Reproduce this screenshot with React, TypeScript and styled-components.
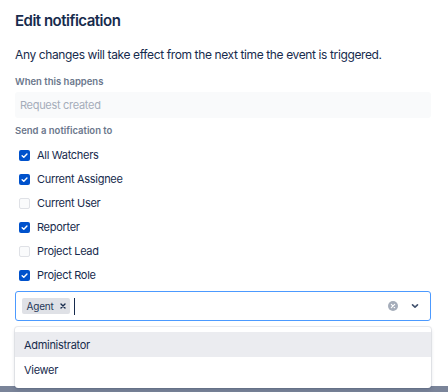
import styled, { createGlobalStyle } from "styled-components";

const GlobalStyle = createGlobalStyle`
  html, body {
    margin: 0;
    padding: 0;
    background: #7a8499;
  }
  body {
    font-family: Inter, "Noto Sans", sans-serif;
    color: #172b4d;
  }
`;

const Page = styled.div`
  width: 448px;
  height: 392px;
  position: relative;
  overflow: hidden;
`;

const Modal = styled.div`
  background: #ffffff;
  height: 386px;
  padding: 11px 17px 0 15px;
  box-sizing: border-box;
  display: flex;
  flex-direction: column;
`;

const Title = styled.h1`
  margin: 0;
  font-size: 15px;
  font-weight: 600;
  line-height: 20px;
  letter-spacing: -0.5px;
  color: #172b4d;
`;

const Description = styled.p`
  margin: 16px 0 0;
  font-size: 12px;
  line-height: 16px;
  letter-spacing: -0.38px;
  white-space: nowrap;
`;

const Label = styled.div<{ $gap: number }>`
  margin-top: ${(p) => p.$gap}px;
  font-size: 9.5px;
  font-weight: 600;
  line-height: 16px;
  color: #6b778c;
`;

const DisabledField = styled.div`
  margin-top: 2px;
  height: 26px;
  display: flex;
  align-items: center;
  padding: 0 5px;
  background: #f9fafb;
  border-radius: 3px;
  font-size: 11px;
  letter-spacing: -0.3px;
  color: #a5adba;
`;

const CheckList = styled.div`
  display: flex;
  flex-direction: column;
  margin-top: 4px;
`;

const CheckRow = styled.label`
  display: flex;
  align-items: center;
  gap: 7px;
  height: 24px;
  padding-left: 4px;
  font-size: 11px;
  letter-spacing: -0.3px;
`;

const Box = styled.span<{ $checked: boolean }>`
  width: 11px;
  height: 11px;
  box-sizing: border-box;
  border-radius: 2px;
  display: flex;
  align-items: center;
  justify-content: center;
  background: ${(p) => (p.$checked ? "#0052cc" : "#fafbfc")};
  border: ${(p) => (p.$checked ? "none" : "1px solid #dfe1e6")};
`;

const Select = styled.div`
  margin-top: 4px;
  height: 30px;
  box-sizing: border-box;
  border: 1.5px solid #4c9aff;
  border-radius: 3px;
  display: flex;
  align-items: center;
  padding: 0 6px 0 5.5px;
  gap: 4px;
`;

const Tag = styled.span`
  display: flex;
  align-items: center;
  gap: 6px;
  height: 16px;
  padding: 0 4px 0 5px;
  background: #dfe1e6;
  border-radius: 2px;
  font-size: 10px;
  letter-spacing: -0.2px;
  color: #253858;
`;

const Cursor = styled.span`
  width: 1px;
  height: 17px;
  background: #172b4d;
`;

const Spacer = styled.div`
  flex: 1;
`;

const IconSlot = styled.span`
  width: 18px;
  display: flex;
  justify-content: center;
`;

const Menu = styled.div`
  position: absolute;
  left: 15px;
  top: 327px;
  width: 416px;
  height: 61px;
  background: #ffffff;
  border-radius: 3px;
  box-shadow: 0 0 0 1px rgba(9, 30, 66, 0.08), 0 2px 4px rgba(9, 30, 66, 0.14);
  padding-top: 5px;
  box-sizing: border-box;
`;

const Option = styled.div<{ $active?: boolean }>`
  height: 25px;
  display: flex;
  align-items: center;
  padding-left: 9px;
  font-size: 11px;
  letter-spacing: -0.3px;
  background: ${(p) => (p.$active ? "#ebecf0" : "transparent")};
`;

const Check = () => (
  <svg width="7" height="7" viewBox="0 0 8 8">
    <path d="M1.3 4.2 3.2 6 6.8 2.2" stroke="#fff" strokeWidth="1.6" fill="none" strokeLinecap="round" strokeLinejoin="round" />
  </svg>
);

const options = [
  { label: "All Watchers", checked: true },
  { label: "Current Assignee", checked: true },
  { label: "Current User", checked: false },
  { label: "Reporter", checked: true },
  { label: "Project Lead", checked: false },
  { label: "Project Role", checked: true },
];

export default function App() {
  return (
    <Page>
      <GlobalStyle />
      <Modal>
        <Title>Edit notification</Title>
        <Description>Any changes will take effect from the next time the event is triggered.</Description>
        <Label $gap={11}>When this happens</Label>
        <DisabledField>Request created</DisabledField>
        <Label $gap={5}>Send a notification to</Label>
        <CheckList>
          {options.map((o) => (
            <CheckRow key={o.label}>
              <Box $checked={o.checked}>{o.checked && <Check />}</Box>
              {o.label}
            </CheckRow>
          ))}
        </CheckList>
        <Select>
          <Tag>
            Agent
            <svg width="6" height="6" viewBox="0 0 6 6">
              <path d="M1 1 5 5M5 1 1 5" stroke="#172b4d" strokeWidth="1.4" strokeLinecap="round" />
            </svg>
          </Tag>
          <Cursor />
          <Spacer />
          <IconSlot>
            <svg width="10" height="10" viewBox="0 0 12 12">
              <circle cx="6" cy="6" r="6" fill="#a5adba" />
              <path d="M4 4 8 8M8 4 4 8" stroke="#fff" strokeWidth="1.4" strokeLinecap="round" />
            </svg>
          </IconSlot>
          <IconSlot>
            <svg width="10" height="8" viewBox="0 0 10 8">
              <path d="M2.5 2.8 5 5.2 7.5 2.8" stroke="#42526e" strokeWidth="1.6" fill="none" strokeLinecap="round" strokeLinejoin="round" />
            </svg>
          </IconSlot>
        </Select>
      </Modal>
      <Menu>
        <Option $active>Administrator</Option>
        <Option>Viewer</Option>
      </Menu>
    </Page>
  );
}
